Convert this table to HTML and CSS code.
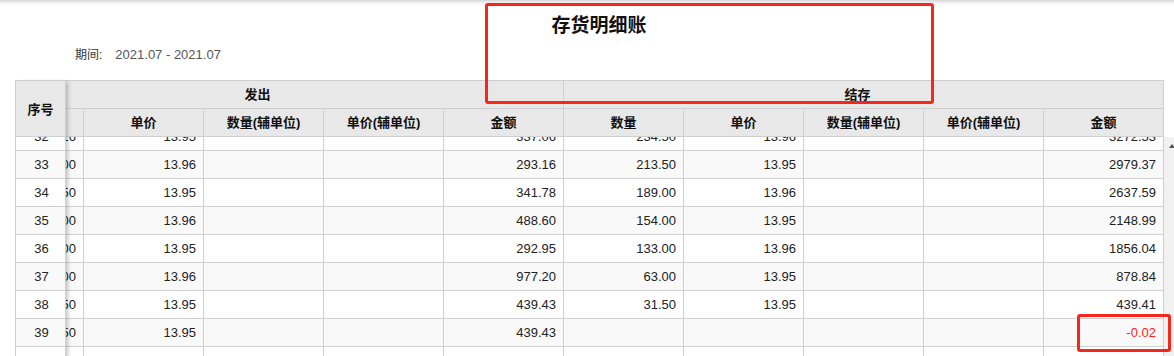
FILE: index.html
```html
<!DOCTYPE html>
<html lang="zh-CN">
<head>
<meta charset="utf-8">
<title>存货明细账</title>
<link rel="stylesheet" href="styles.css">
</head>
<body>
<div class="page">
  <div class="topbar"></div>
  <div class="title">存货明细账</div>
  <div class="period"><span class="period-label">期间:</span><span class="period-value">2021.07 - 2021.07</span></div>

  <div class="grid">
    <div class="fixed">
      <div class="fixed-head">序号</div>
      <div class="fixed-body">
        <div class="fixed-rows">
          <div class="fc">32</div>
          <div class="fc odd">33</div>
          <div class="fc">34</div>
          <div class="fc odd">35</div>
          <div class="fc">36</div>
          <div class="fc odd">37</div>
          <div class="fc">38</div>
          <div class="fc odd">39</div>
          <div class="fc">40</div>
        </div>
      </div>
    </div>

    <div class="main">
      <div class="main-head">
        <div class="cols">
          <div class="hrow">
            <div class="gh">发出</div>
            <div class="gh">结存</div>
          </div>
          <div class="hrow">
            <div class="hc">数量</div>
            <div class="hc">单价</div>
            <div class="hc">数量(辅单位)</div>
            <div class="hc">单价(辅单位)</div>
            <div class="hc">金额</div>
            <div class="hc">数量</div>
            <div class="hc">单价</div>
            <div class="hc">数量(辅单位)</div>
            <div class="hc">单价(辅单位)</div>
            <div class="hc">金额</div>
          </div>
        </div>
      </div>
      <div class="main-body">
        <div class="viewport">
          <div class="cols rows">
            <div class="row">
              <div class="c">24.16</div><div class="c">13.95</div><div class="c"></div><div class="c"></div><div class="c">337.06</div>
              <div class="c">234.50</div><div class="c">13.96</div><div class="c"></div><div class="c"></div><div class="c">3272.53</div>
            </div>
            <div class="row odd">
              <div class="c">21.00</div><div class="c">13.96</div><div class="c"></div><div class="c"></div><div class="c">293.16</div>
              <div class="c">213.50</div><div class="c">13.95</div><div class="c"></div><div class="c"></div><div class="c">2979.37</div>
            </div>
            <div class="row">
              <div class="c">24.50</div><div class="c">13.95</div><div class="c"></div><div class="c"></div><div class="c">341.78</div>
              <div class="c">189.00</div><div class="c">13.96</div><div class="c"></div><div class="c"></div><div class="c">2637.59</div>
            </div>
            <div class="row odd">
              <div class="c">35.00</div><div class="c">13.96</div><div class="c"></div><div class="c"></div><div class="c">488.60</div>
              <div class="c">154.00</div><div class="c">13.95</div><div class="c"></div><div class="c"></div><div class="c">2148.99</div>
            </div>
            <div class="row">
              <div class="c">21.00</div><div class="c">13.95</div><div class="c"></div><div class="c"></div><div class="c">292.95</div>
              <div class="c">133.00</div><div class="c">13.96</div><div class="c"></div><div class="c"></div><div class="c">1856.04</div>
            </div>
            <div class="row odd">
              <div class="c">70.00</div><div class="c">13.96</div><div class="c"></div><div class="c"></div><div class="c">977.20</div>
              <div class="c">63.00</div><div class="c">13.95</div><div class="c"></div><div class="c"></div><div class="c">878.84</div>
            </div>
            <div class="row">
              <div class="c">31.50</div><div class="c">13.95</div><div class="c"></div><div class="c"></div><div class="c">439.43</div>
              <div class="c">31.50</div><div class="c">13.95</div><div class="c"></div><div class="c"></div><div class="c">439.41</div>
            </div>
            <div class="row odd">
              <div class="c">31.50</div><div class="c">13.95</div><div class="c"></div><div class="c"></div><div class="c">439.43</div>
              <div class="c"></div><div class="c"></div><div class="c"></div><div class="c"></div><div class="c neg">-0.02</div>
            </div>
            <div class="row">
              <div class="c">794.00</div><div class="c"></div><div class="c"></div><div class="c"></div><div class="c">11073.86</div>
              <div class="c"></div><div class="c"></div><div class="c"></div><div class="c"></div><div class="c"></div>
            </div>
          </div>
        </div>
        <div class="scrollbar"><div class="arrow-up"></div></div>
      </div>
    </div>
  </div>

  <div class="mark mark-title"></div>
  <div class="mark mark-cell"></div>
</div>
</body>
</html>
```
FILE: styles.css
```css
html, body {
  margin: 0;
  padding: 0;
  overflow: hidden;
  background: #fff;
}

body {
  font-family: "Liberation Sans", Arial, "Noto Sans CJK SC", sans-serif;
  color: #222;
}

.page {
  position: relative;
  height: 100vh;
}

.topbar {
  height: 6px;
  background: linear-gradient(#d6d6d6, #f4f4f4 50%, #fff);
}

.title {
  margin-top: 8px;
  height: 24px;
  line-height: 24px;
  font-size: 19px;
  font-weight: bold;
  color: #111;
  text-align: center;
  padding-left: 24px;
}

.period {
  margin-top: 8px;
  height: 18px;
  line-height: 18px;
  padding-left: 75px;
  display: flex;
  align-items: baseline;
}

.period-label {
  font-size: 12px;
  color: #333;
}

.period-value {
  font-size: 13px;
  color: #555;
  margin-left: 13px;
}

.grid {
  margin-top: 16px;
  margin-left: 15px;
  display: flex;
  align-items: flex-start;
}

/* fixed first column */
.fixed {
  width: 51px;
  box-sizing: border-box;
  border-top: 1px solid #cfcfcf;
  border-left: 1px solid #cfcfcf;
  border-right: 1px solid #cfcfcf;
  position: relative;
  z-index: 1;
  background: #fff;
  box-shadow: 4px 0 4px -2px rgba(0, 0, 0, 0.22);
}

.fixed-head {
  height: 56px;
  box-sizing: border-box;
  border-bottom: 1px solid #cfcfcf;
  background: #e8e8e8;
  font-size: 13px;
  font-weight: bold;
  color: #111;
  display: flex;
  align-items: center;
  justify-content: center;
}

.fixed-body {
  overflow: hidden;
}

.fixed-rows {
  margin-top: -14px;
}

.fc {
  height: 28px;
  box-sizing: border-box;
  border-bottom: 1px solid #cfcfcf;
  line-height: 27px;
  font-size: 13px;
  text-align: center;
  padding-left: 2px;
}

.fc.odd,
.row.odd {
  background: #f9f9f9;
}

/* scrolled main area */
.main {
  flex: 1;
  min-width: 0;
  display: flex;
  flex-direction: column;
}

.main-head {
  width: 1098px;
  overflow: hidden;
  border-top: 1px solid #cfcfcf;
}

.cols {
  width: 1200px;
  margin-left: -102px;
}

.hrow {
  display: flex;
}

.gh,
.hc {
  height: 28px;
  box-sizing: border-box;
  border-right: 1px solid #cfcfcf;
  border-bottom: 1px solid #cfcfcf;
  background: #e8e8e8;
  line-height: 27px;
  font-size: 13px;
  font-weight: bold;
  color: #111;
  text-align: center;
}

.gh {
  width: 600px;
  padding-right: 12px;
}

.hc {
  width: 120px;
}

.main-body {
  display: flex;
}

.viewport {
  width: 1098px;
  overflow: hidden;
}

.rows {
  margin-top: -14px;
}

.row {
  display: flex;
}

.c {
  width: 120px;
  height: 28px;
  box-sizing: border-box;
  border-right: 1px solid #cfcfcf;
  border-bottom: 1px solid #cfcfcf;
  line-height: 27px;
  font-size: 13px;
  text-align: right;
  padding-right: 7px;
  color: #222;
}

.c.neg {
  color: #ff1a1a;
}

.scrollbar {
  width: 10px;
  background: #f1f1f1;
  padding-top: 7px;
  box-sizing: border-box;
}

.arrow-up {
  width: 0;
  height: 0;
  margin-left: 5px;
  border-left: 3px solid transparent;
  border-right: 3px solid transparent;
  border-bottom: 4px solid #555;
}

/* red annotation boxes */
.mark {
  position: absolute;
  box-sizing: border-box;
  border: 3px solid #f5261c;
  border-radius: 3px;
  z-index: 5;
}

.mark-title {
  left: 485px;
  top: 3px;
  width: 449px;
  height: 101px;
}

.mark-cell {
  left: 1077px;
  top: 314px;
  width: 94px;
  height: 38px;
}
```
